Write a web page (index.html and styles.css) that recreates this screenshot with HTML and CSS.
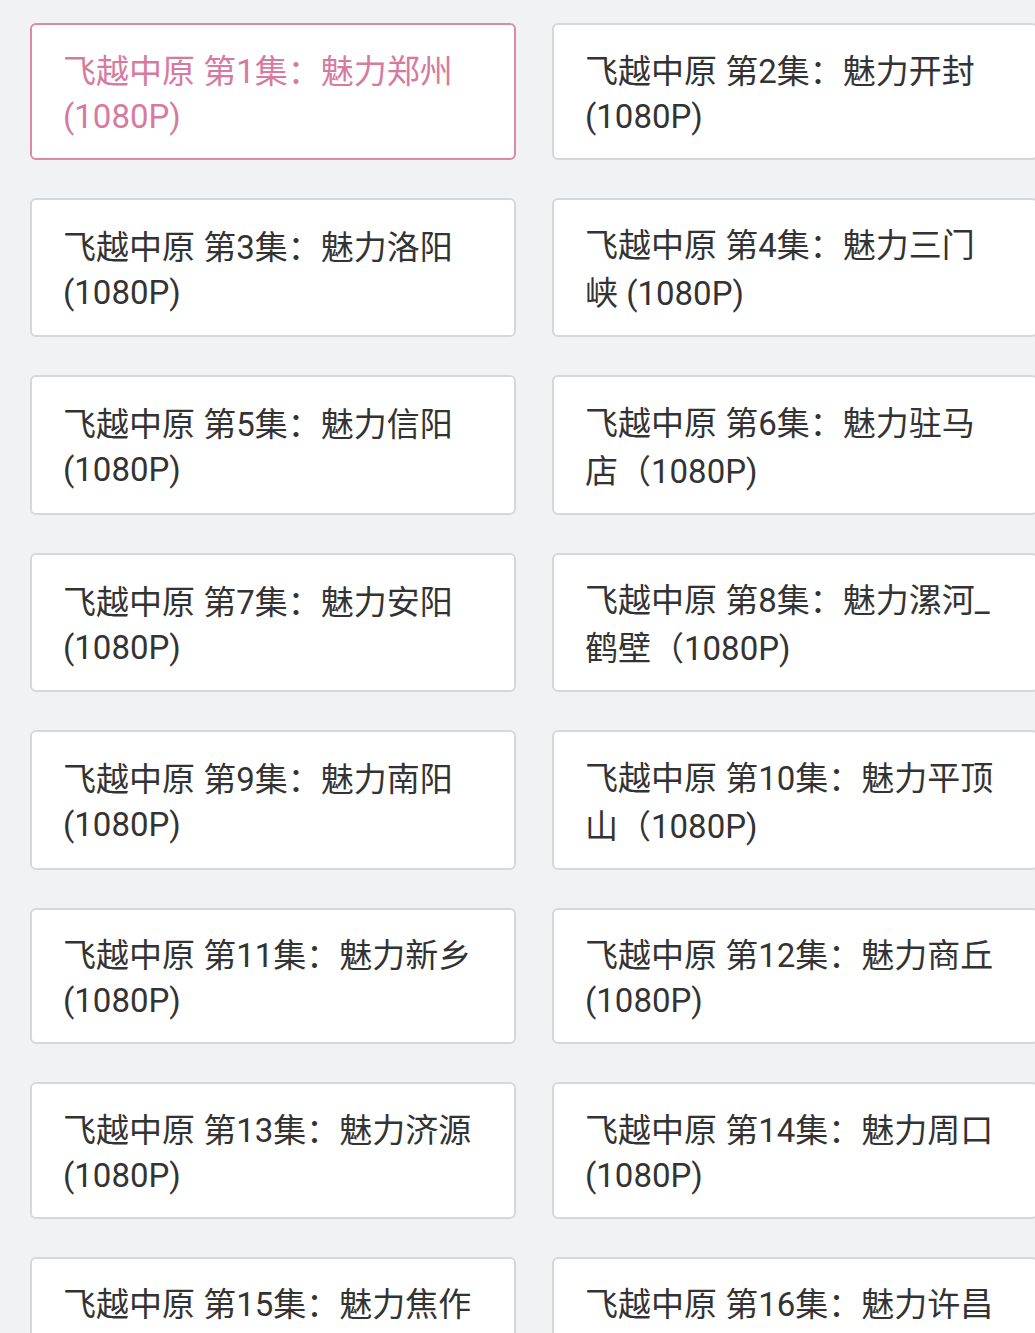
FILE: index.html
```html
<!DOCTYPE html>
<html lang="zh-CN">
<head>
    <meta charset="UTF-8">
    <meta name="viewport" content="width=device-width, initial-scale=1.0">
    <title>飞越中原</title>
    <link rel="stylesheet" href="styles.css">
</head>
<body>
    <main class="episodes">
        <!-- 当前播放的一集 -->
        <div class="episode active"><p><span>飞越中原 第1集：魅力郑州(1080P)</span></p></div>
        <div class="episode"><p><span>飞越中原 第2集：魅力开封(1080P)</span></p></div>
        <div class="episode"><p><span>飞越中原 第3集：魅力洛阳(1080P)</span></p></div>
        <div class="episode"><p><span>飞越中原 第4集：魅力三门峡 (1080P)</span></p></div>
        <div class="episode"><p><span>飞越中原 第5集：魅力信阳(1080P)</span></p></div>
        <div class="episode"><p><span>飞越中原 第6集：魅力驻马店（1080P)</span></p></div>
        <div class="episode"><p><span>飞越中原 第7集：魅力安阳(1080P)</span></p></div>
        <div class="episode"><p><span>飞越中原 第8集：魅力漯河_鹤壁（1080P)</span></p></div>
        <div class="episode"><p><span>飞越中原 第9集：魅力南阳(1080P)</span></p></div>
        <div class="episode"><p><span>飞越中原 第10集：魅力平顶山（1080P)</span></p></div>
        <div class="episode"><p><span>飞越中原 第11集：魅力新乡(1080P)</span></p></div>
        <div class="episode"><p><span>飞越中原 第12集：魅力商丘(1080P)</span></p></div>
        <div class="episode"><p><span>飞越中原 第13集：魅力济源(1080P)</span></p></div>
        <div class="episode"><p><span>飞越中原 第14集：魅力周口(1080P)</span></p></div>
        <div class="episode"><p><span>飞越中原 第15集：魅力焦作(1080P)</span></p></div>
        <div class="episode"><p><span>飞越中原 第16集：魅力许昌(1080P)</span></p></div>
    </main>
</body>
</html>
```

FILE: styles.css
```css
/* 剧集列表 */
html, body {
    overflow: hidden;
}
body {
    margin: 0;
    padding: 0;
    background-color: #f1f2f4;
    font-family: "Noto Sans", "Noto Sans CJK SC", sans-serif;
    color: #333;
}
.episodes {
    display: grid;
    grid-template-columns: 486px 486px;
    column-gap: 36px;
    row-gap: 38px;
    padding: 23px 0 0 30px;
}
.episode {
    display: flex;
    align-items: center;
    background: #fff;
    border: 2px solid #d6d7d9;
    border-radius: 6px;
    padding: 19.75px 31px;
}
.episode p {
    margin: 0;
    font-size: 33px;
    line-height: normal;
}
.episode span {
    font-family: Roboto, "Noto Sans CJK SC", sans-serif;
}
.episode.active {
    border-color: #df86a9;
}
.episode.active p {
    color: #d77a9f;
}
```
